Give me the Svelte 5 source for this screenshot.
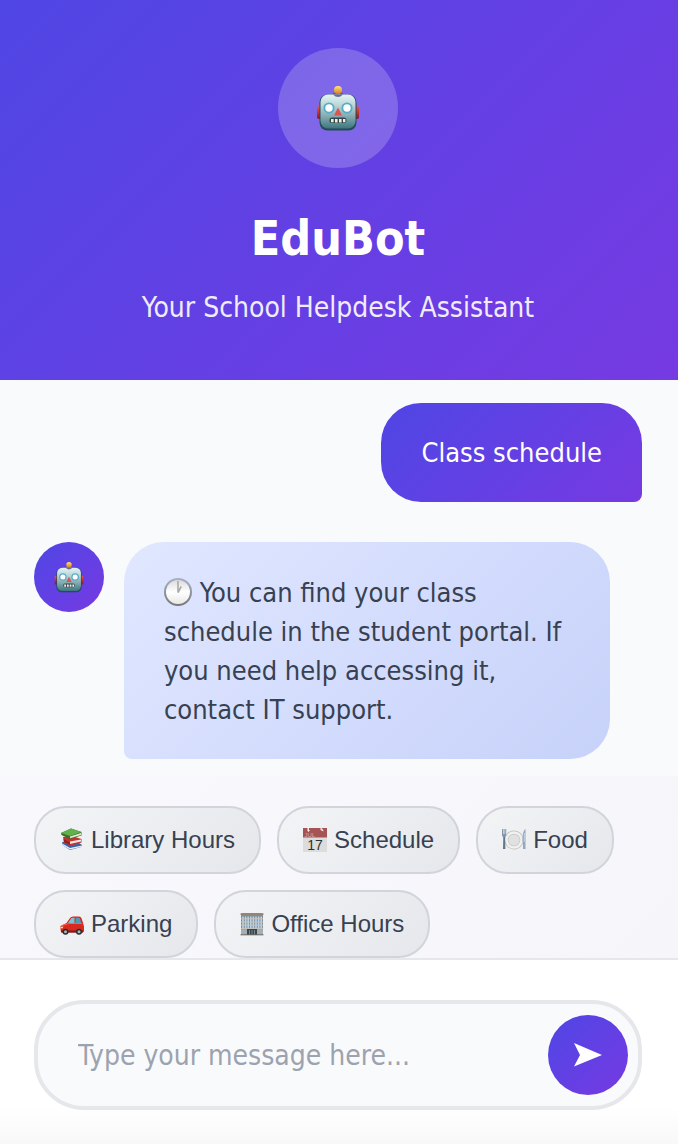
<script>
  const topics = [
    { icon: 'books', label: 'Library Hours' },
    { icon: 'calendar', label: 'Schedule' },
    { icon: 'plate', label: 'Food' },
    { icon: 'car', label: 'Parking' },
    { icon: 'office', label: 'Office Hours' },
  ];
  let draft = $state('');
</script>

{#snippet robot()}
  <svg class="robot" viewBox="0 0 44 46" aria-hidden="true">
    <defs>
      <linearGradient id="face" x1="0" y1="0" x2="0" y2="1">
        <stop offset="0" stop-color="#e4f3f3" />
        <stop offset=".3" stop-color="#bdd8da" />
        <stop offset=".65" stop-color="#83a9af" />
        <stop offset="1" stop-color="#3d7780" />
      </linearGradient>
      <linearGradient id="ear" x1="0" y1="0" x2="0" y2="1">
        <stop offset="0" stop-color="#e8544c" />
        <stop offset="1" stop-color="#8c1524" />
      </linearGradient>
      <linearGradient id="bulb" x1="0" y1="0" x2="0" y2="1">
        <stop offset="0" stop-color="#ffe47a" />
        <stop offset="1" stop-color="#e07c18" />
      </linearGradient>
    </defs>
    <rect x="1" y="21" width="6" height="13" rx="2" fill="url(#ear)" />
    <rect x="37" y="21" width="6" height="13" rx="2" fill="url(#ear)" />
    <ellipse cx="22" cy="9.5" rx="5.5" ry="3" fill="#6a568f" />
    <circle cx="22" cy="5" r="4" fill="url(#bulb)" />
    <rect x="3.5" y="9.5" width="37" height="36" rx="8" fill="#234c57" />
    <rect x="4.5" y="9.5" width="35" height="34" rx="7.5" fill="url(#face)" />
    <path d="M17 9.500q5 5 10 0z" fill="#6a6a93" />
    <circle cx="13" cy="23" r="5.600" fill="#58abc9" />
    <circle cx="31" cy="23" r="5.600" fill="#58abc9" />
    <circle cx="13" cy="23" r="3.700" fill="#fff" />
    <circle cx="31" cy="23" r="3.700" fill="#fff" />
    <path d="M22 22.500l4 8h-8z" fill="#d95550" />
    <rect x="13.500" y="32.500" width="17" height="5.500" rx="2.600" fill="#33484c" />
    <path d="M15 34h2.600v3.200H15zM19 34h2.600v3.400H19zM23 34h2.600v3.400H23zM27 34h2.400v3.200H27z" fill="#eef0e8" />
  </svg>
{/snippet}

{#snippet glyph(name)}
  <svg class="glyph" viewBox="0 0 24 24" aria-hidden="true">
    {#if name === 'books'}
      <path d="M2 14l14-1 6 4v1.800L10 22l-7-4.500z" fill="#3b62a8" />
      <path d="M3 16l7 4 12-2.500v1.200L10 21.600 3 17.500z" fill="#eef0f4" />
      <path d="M3 9l9-1 9.500 3v3.500L10.500 18 4 14.500z" fill="#c2322e" />
      <path d="M10 13.500l11-2v2L10 16z" fill="#f3e5dd" />
      <path d="M3.500 11l6.500 3.500v2.500L4 14z" fill="#8f201f" />
      <path d="M1 5L11 .5 21.500 4v3.500L10 11 1.500 7z" fill="#37702b" />
      <path d="M1 5L11 .5 21.500 4 10 8z" fill="#63b14b" />
      <path d="M10 8.500l11-3.600v2L10 10.200z" fill="#e5ead8" />
    {:else if name === 'calendar'}
      <rect width="24" height="24" fill="#dcdcdc" />
      <path d="M0 0h24v9.500H0z" fill="#a65353" />
      <path d="M4.500 0h1.500v2h1L5.500 4 4 2.500h.5zM17.500 0q2.500 0 3 3.500l-3-1.500z" fill="#f5e8e8" />
      <text x="1.500" y="8.500" font-size="6" fill="#d7aaaa">JUL</text>
      <text x="12" y="21.500" font-size="14" text-anchor="middle" fill="#2e2e2e">17</text>
    {:else if name === 'plate'}
      <circle cx="12" cy="12" r="9.500" fill="#b9bbbd" />
      <circle cx="12" cy="12" r="8.800" fill="#f1f1f0" />
      <circle cx="12" cy="12" r="6.300" fill="#c5c6c8" />
      <circle cx="12" cy="12" r="5.600" fill="#e1e1e1" />
      <path d="M0 1h1v5h.6V1h1v5h.6V1h1v6.500L3 9.500H1.200L0 7.500z" fill="#8497aa" />
      <path d="M1.300 9h1.700l.4 12H1z" fill="#60778d" />
      <path d="M23.500 1v20h-2.500v-7l-.5-1c0-6 .5-10 3-12z" fill="#91a8c0" />
      <path d="M22.300 5v9" stroke="#d4e1ed" stroke-width=".8" />
    {:else if name === 'car'}
      <path d="M.5 14l6-3L10 6q1-1.500 3-1.500h6q2 0 2.600 2l1.600 5 .8 3v5l-1.500 1H2q-1.500-1-1.500-3z" fill="#d9291f" />
      <path d="M8 11l3-4.500q.5-.8 1.600-.8h2L14.500 11z" fill="#79c2d8" />
      <path d="M15.700 5.700h3q1 0 1.400 1.200l1 4.100h-5.600z" fill="#5499b3" />
      <path d="M2 13.500l7-2h13" stroke="#ff6251" fill="none" />
      <path d="M1 18.500h22v2H1z" fill="#702125" />
      <circle cx="5.500" cy="19.700" r="3" fill="#292b2e" />
      <circle cx="19" cy="19.700" r="3" fill="#292b2e" />
      <circle cx="5.500" cy="19.700" r="1.500" fill="#aeb4ba" />
      <circle cx="19" cy="19.700" r="1.500" fill="#aeb4ba" />
      <path d="M.8 15l2.500-.5-.5 1.700H.7z" fill="#ffe5a8" />
    {:else}
      <path d="M1 3h22v20H1z" fill="#7d8c96" />
      <path d="M.5 1.500L2 1h20l1.500.5V3H.5z" fill="#948578" />
      <path d="M3 4.500v13M5.600 4.500v13M8.200 4.500v13M10.800 4.500v13M13.400 4.500v13M16 4.500v13M18.600 4.500v13M21.200 4.500v13" stroke="#b9d4e8" stroke-width="1.600" />
      <path d="M1 6.800h22M1 10h22M1 13.200h22M1 16.400h22" stroke="#c7c4ba" stroke-width="1" />
      <path d="M1 17.500h22V23H1z" fill="#a3afb5" />
      <path d="M7 17h10v6H7z" fill="#39444c" />
      <path d="M9.500 18v5M12 18v5M14.500 18v5" stroke="#8498a5" stroke-width=".8" />
      <path d="M.5 22.300h23v1H.5z" fill="#6c665e" />
    {/if}
  </svg>
{/snippet}

<div class="chat">
  <header>
    <div class="logo">{@render robot()}</div>
    <h1>EduBot</h1>
    <p>Your School Helpdesk Assistant</p>
  </header>

  <main>
    <div class="message user">Class schedule</div>
    <div class="reply">
      <div class="avatar">{@render robot()}</div>
      <div class="message bot">
        <svg class="clock" viewBox="0 0 28 28" aria-hidden="true">
          <defs>
            <linearGradient id="dial" x1="0" y1="0" x2="0" y2="1">
              <stop offset="0" stop-color="#dcdcdc" />
              <stop offset=".5" stop-color="#fff" />
              <stop offset="1" stop-color="#e8e8e8" />
            </linearGradient>
            <linearGradient id="rim" x1="0" y1="0" x2="0" y2="1">
              <stop offset="0" stop-color="#a9b2c6" />
              <stop offset="1" stop-color="#777" />
            </linearGradient>
          </defs>
          <circle cx="14" cy="14" r="14" fill="url(#rim)" />
          <circle cx="14" cy="14" r="12" fill="url(#dial)" />
          <path d="M14 3v11.500l3.200-6" fill="none" stroke="#aaa" stroke-width="1.600" />
        </svg>
        You can find your class schedule in the student portal. If you need help accessing it, contact IT support.
      </div>
    </div>
  </main>

  <nav aria-label="Quick topics">
    {#each topics as topic}
      <button type="button" class="topic">{@render glyph(topic.icon)}{topic.label}</button>
    {/each}
  </nav>

  <footer>
    <form onsubmit={(event) => event.preventDefault()}>
      <input type="text" aria-label="Message" placeholder="Type your message here..." bind:value={draft} />
      <button type="submit" class="send" aria-label="Send">
        <svg viewBox="0 0 28 24" aria-hidden="true"><path d="M0 0l28 12L0 23.500 6 12z" fill="#fff" /></svg>
      </button>
    </form>
  </footer>
</div>

<style>
  :global(body) {
    margin: 0;
  }
  .chat {
    display: flex;
    flex-direction: column;
    min-height: 100vh;
    background: #f9fafc;
    color: #374151;
    font: 28px/39px Tahoma, 'DejaVu Sans Condensed', 'DejaVu Sans', sans-serif;
  }
  .chat * {
    box-sizing: border-box;
  }
  header {
    display: flex;
    flex-direction: column;
    align-items: center;
    padding: 48px 36px 48px 34px;
    background: linear-gradient(135deg, #4f46e5, #763ae2);
    color: #fff;
    text-align: center;
  }
  .logo,
  .avatar {
    display: grid;
    place-items: center;
    flex: none;
    border-radius: 50%;
  }
  .logo {
    width: 120px;
    height: 120px;
    background: rgba(255, 255, 255, 0.2);
  }
  .logo .robot {
    width: 44px;
    height: 46px;
  }
  h1 {
    margin: 40px 0 16px;
    font-size: 48px;
    line-height: 60px;
  }
  header p {
    margin: 0;
    line-height: 48px;
    opacity: 0.9;
  }
  main {
    display: flex;
    flex-direction: column;
    flex: 1;
    gap: 40px;
    padding: 23px 36px 17px 34px;
  }
  .message {
    padding: 30px 40px;
    border-radius: 40px;
    font-size: 27px;
  }
  .user {
    align-self: flex-end;
    border-bottom-right-radius: 8px;
    background: linear-gradient(135deg, #4f46e5, #763ae2);
    color: #fff;
  }
  .reply {
    display: flex;
    align-items: flex-start;
    gap: 20px;
    padding-right: 32px;
  }
  .avatar {
    width: 70px;
    height: 70px;
    background: linear-gradient(135deg, #4f46e5, #763ae2);
  }
  .avatar .robot {
    width: 30px;
    height: 32px;
  }
  .bot {
    flex: 1;
    padding-top: 31px;
    border-bottom-left-radius: 8px;
    background: linear-gradient(135deg, #e0e7ff, #c7d2fa);
  }
  .clock {
    width: 28px;
    height: 28px;
    vertical-align: -4px;
  }
  nav {
    display: flex;
    flex-wrap: wrap;
    gap: 16px;
    padding: 30px 36px 0 34px;
    background: linear-gradient(135deg, #f8f8fd, #f6f5fa);
  }
  .topic {
    display: flex;
    align-items: center;
    gap: 7px;
    height: 68px;
    padding: 0 24px;
    border: 2px solid #d1d5db;
    border-radius: 32px;
    background: linear-gradient(135deg, #f3f4f6, #e5e7eb);
    color: #374151;
    font: 24px 'Liberation Sans', Arial, sans-serif;
  }
  .glyph {
    width: 24px;
    height: 24px;
  }
  footer {
    padding: 40px 36px 34px 34px;
    border-top: 2px solid #e5e7eb;
    background: linear-gradient(#fff 80%, #f8f8f8);
  }
  form {
    display: flex;
    align-items: center;
    height: 110px;
    padding: 0 10px 0 40px;
    border: 4px solid #e5e7eb;
    border-radius: 50px;
    background: #f9fafc;
  }
  input {
    flex: 1;
    min-width: 0;
    padding: 0;
    border: 0;
    outline: 0;
    background: transparent;
    color: #374151;
    font: inherit;
  }
  input::placeholder {
    color: #9ca3af;
    opacity: 1;
  }
  .send {
    display: grid;
    place-items: center;
    flex: none;
    width: 80px;
    height: 80px;
    padding: 0;
    border: 0;
    border-radius: 50%;
    background: linear-gradient(135deg, #4f46e5, #763ae2);
  }
  .send svg {
    width: 28px;
    height: 24px;
  }
</style>
